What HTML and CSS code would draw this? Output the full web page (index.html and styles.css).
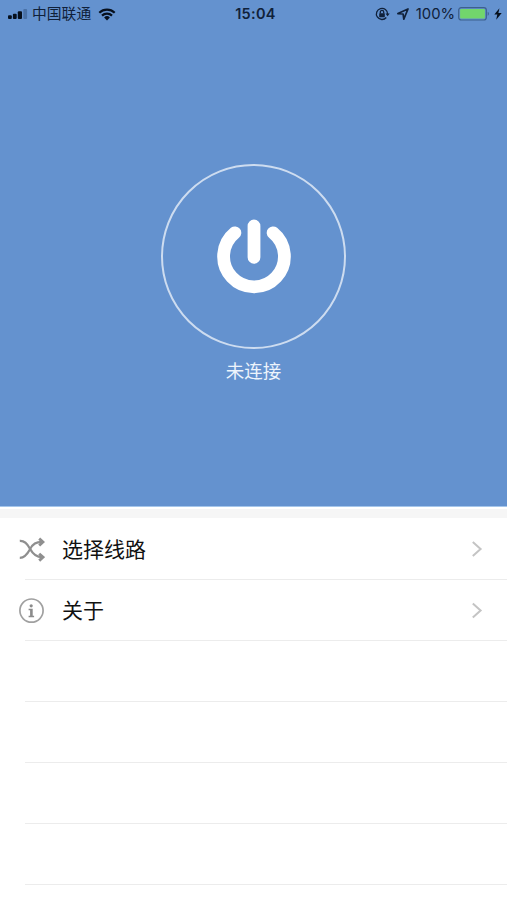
FILE: index.html
```html
<!DOCTYPE html>
<html lang="zh-CN">
<head>
    <meta charset="UTF-8">
    <meta name="viewport" content="width=device-width, initial-scale=1">
    <title>未连接</title>
    <link rel="stylesheet" href="styles.css">
</head>
<body>
    <div class="hero">
        <div class="status-bar">
            <div class="status-left">
                <svg class="signal" width="20" height="12" viewBox="0 0 20 12">
                    <rect x="0" y="7.2" width="3.8" height="3.8" rx="1"/>
                    <rect x="4.9" y="5.8" width="3.8" height="5.2" rx="1"/>
                    <rect x="9.8" y="3.2" width="4.2" height="7.8" rx="1"/>
                    <rect class="weak" x="15.3" y="1" width="3.8" height="10" rx="1"/>
                </svg>
                <span class="carrier">中国联通</span>
                <svg class="wifi" width="18" height="13" viewBox="0 0 18 13">
                    <path d="M1.3 4.7a11 11 0 0 1 15.4 0M4 7.6a7.2 7.2 0 0 1 10 0"/>
                    <path class="dot" d="M9 12.4L6.1 9.5a4.2 4.2 0 0 1 5.8 0z"/>
                </svg>
            </div>
            <div class="time">15:04</div>
            <div class="status-right">
                <svg class="lock" width="15" height="14" viewBox="0 0 15 14">
                    <path d="M11.3 10.5A5.6 5.6 0 1 1 12.6 7"/>
                    <path class="fill" d="M10.5 6.4h4.2l-2.1 2.8z"/>
                    <rect class="fill" x="4.2" y="6.2" width="5.6" height="4" rx=".6"/>
                    <path d="M5.3 6.4V5.1a1.7 1.7 0 0 1 3.4 0v1.3"/>
                </svg>
                <svg class="location" width="12" height="12" viewBox="0 0 12 12">
                    <path d="M.9 5.6L11 1 6.8 11.1 6.1 6z"/>
                </svg>
                <span class="percent">100%</span>
                <svg class="battery" width="33" height="15" viewBox="0 0 33 15">
                    <rect class="case" x="0.7" y="0.6" width="27.6" height="12.4" rx="2.5"/>
                    <rect class="level" x="2.1" y="2" width="24.8" height="9.6" rx="1"/>
                    <path class="cap" d="M29.7 4.8c1.6.6 1.6 3.4 0 4z"/>
                </svg>
                <svg class="bolt" width="8" height="12" viewBox="0 0 8 12">
                    <path d="M5.4.3L.3 6.6h3L2.2 11.7 7.7 5.1H4.4z"/>
                </svg>
            </div>
        </div>

        <div class="connect">
            <button class="power" aria-label="连接">
                <svg width="76" height="76" viewBox="0 0 76 76">
                    <path d="M18.9 14.8a30.4 30.4 0 1 0 38.2 0M38 8v31.3"/>
                </svg>
            </button>
            <div class="state">未连接</div>
        </div>
    </div>

    <div class="gap"></div>

    <div class="menu">
        <div class="row">
            <svg class="icon" width="26" height="26" viewBox="0 0 26 26">
                <path class="line" d="M.8 5C5.4 4.6 8 7.2 11 12.8S17 21.2 23 21.2M.8 21.8C5.4 21.8 8 18.8 11 13.2S17 6 23 6"/>
                <path class="head" d="M20.2 2.6L24 6l-3.8 3.6M20.2 17.8l3.8 3.4-3.8 3.4"/>
            </svg>
            <span class="label">选择线路</span>
            <svg class="arrow" width="12" height="18" viewBox="0 0 12 18"><path d="M1.8 2l7.8 7-7.8 7"/></svg>
        </div>
        <div class="row">
            <svg class="icon info" width="26" height="26" viewBox="0 0 26 26">
                <circle class="ring" cx="12.5" cy="12.6" r="11.6"/>
                <circle class="fill" cx="12.2" cy="7.8" r="1.6"/>
                <path class="fill" d="M9.6 10.8h4.1v7h1.4v1.4H9.6v-1.4h1.5v-5.6H9.6z"/>
            </svg>
            <span class="label">关于</span>
            <svg class="arrow" width="12" height="18" viewBox="0 0 12 18"><path d="M1.8 1.5l7.8 7-7.8 7"/></svg>
        </div>
        <div class="row"></div>
        <div class="row"></div>
        <div class="row"></div>
        <div class="row"></div>
    </div>
</body>
</html>
```

FILE: styles.css
```css
* {
    box-sizing: border-box;
}
body {
    margin: 0;
    height: 900px;
    overflow: hidden;
    background: #fff;
    font-family: Inter, "Noto Sans CJK SC", sans-serif;
}
svg {
    display: block;
    flex: none;
}
.hero {
    height: 507px;
    background: #6492cf;
    border-bottom: 1px solid #a5c6eb;
}

/* status bar */
.status-bar {
    display: grid;
    grid-template-columns: 1fr 42px 1fr;
    align-items: center;
    height: 28px;
    padding: 0 5px 0 8px;
    color: #10213a;
    font-size: 15px;
    line-height: 28px;
    white-space: nowrap;
}
.status-left,
.status-right {
    display: flex;
    align-items: center;
}
.status-right {
    justify-content: flex-end;
}
.signal {
    fill: #07101d;
}
.signal .weak {
    fill: #4a72a8;
}
.carrier {
    margin-left: 4px;
    font-size: 14.8px;
}
.wifi {
    margin-left: 7px;
    fill: none;
    stroke: #07101d;
    stroke-width: 2.2;
}
.wifi .dot {
    fill: #07101d;
    stroke: none;
}
.time {
    padding-left: 1px;
    font-size: 14.5px;
    font-weight: 600;
    text-align: center;
    letter-spacing: 0.3px;
}
.lock {
    fill: none;
    stroke: #10213a;
    stroke-width: 1.3;
}
.lock .fill {
    fill: #10213a;
    stroke: none;
}
.location {
    margin-left: 7px;
    fill: none;
    stroke: #10213a;
    stroke-width: 1.7;
    stroke-linejoin: round;
}
.percent {
    margin-left: 7px;
    font-size: 14.8px;
}
.battery {
    margin-left: 3px;
}
.battery .case {
    fill: none;
    stroke: #3d608d;
    stroke-width: 1.2;
}
.battery .level {
    fill: #72d66c;
}
.battery .cap {
    fill: #3d608d;
}
.bolt {
    margin-left: 3px;
    fill: #07101d;
}

/* power button */
.connect {
    display: flex;
    flex-direction: column;
    align-items: center;
    padding-top: 135.5px;
}
.power {
    display: flex;
    align-items: center;
    justify-content: center;
    width: 185px;
    height: 185px;
    padding: 0;
    background: none;
    border: 2px solid rgba(255, 255, 255, 0.68);
    border-radius: 50%;
}
.power svg {
    fill: none;
    stroke: #fff;
    stroke-width: 12.8;
    stroke-linecap: round;
}
.state {
    margin-top: 8px;
    color: #edf4fc;
    font-size: 18.5px;
    line-height: 28px;
}

/* list */
.gap {
    height: 9px;
    margin-top: 2px;
    background: #f6f6f6;
}
.row {
    display: flex;
    align-items: center;
    height: 61px;
    padding: 0 24px 0 19px;
    background: linear-gradient(#ececec, #ececec) 25px 100% / 100% 1px no-repeat;
}
.row:first-child {
    height: 62px;
}
.icon {
    fill: none;
    stroke: #8f8f8f;
    stroke-width: 2.3;
}
.icon .head {
    stroke-width: 2.8;
}
.icon .ring {
    stroke: #a0a0a0;
    stroke-width: 1.7;
}
.icon .fill {
    fill: #8b8b8b;
    stroke: none;
}
.label {
    flex: 1;
    margin-left: 17px;
    color: #111;
    font-size: 21px;
    line-height: 30px;
}
.row:first-child .label {
    padding-top: 2px;
}
.arrow {
    fill: none;
    stroke: #c4c4c4;
    stroke-width: 2;
}
```
